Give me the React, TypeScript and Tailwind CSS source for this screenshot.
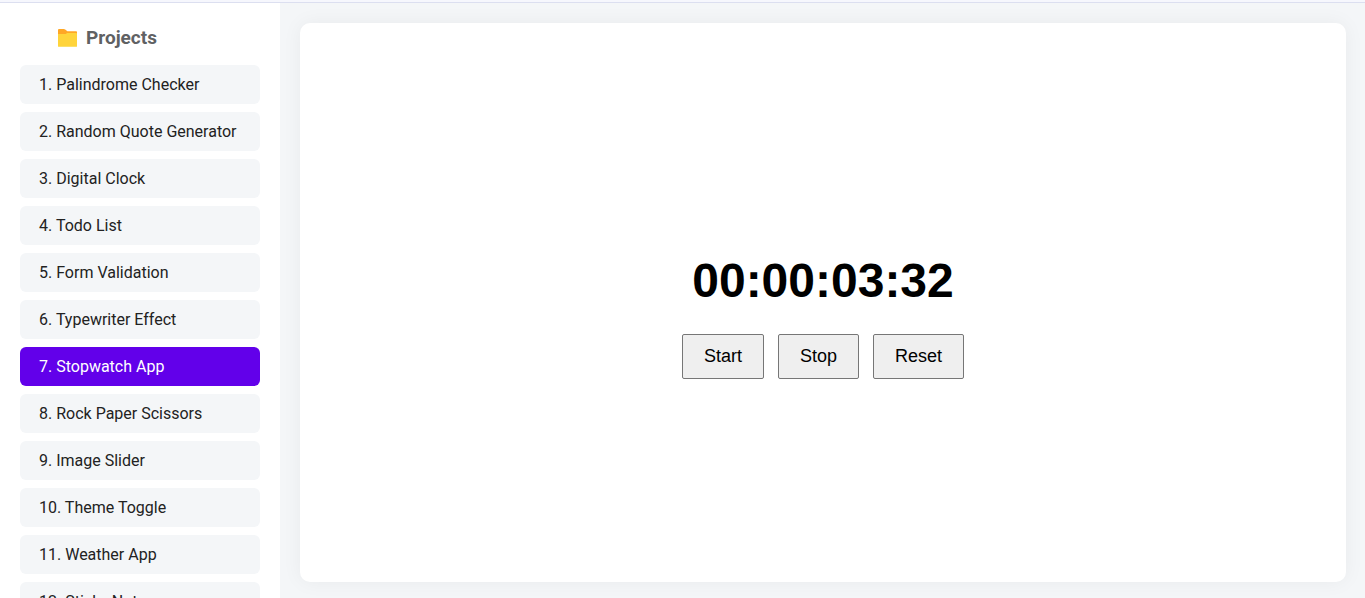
import { useEffect, useRef, useState } from "react";

const projects = [
  "Palindrome Checker",
  "Random Quote Generator",
  "Digital Clock",
  "Todo List",
  "Form Validation",
  "Typewriter Effect",
  "Stopwatch App",
  "Rock Paper Scissors",
  "Image Slider",
  "Theme Toggle",
  "Weather App",
  "Sticky Notes",
];

function FolderIcon() {
  return (
    <svg viewBox="0 0 20 20" className="size-5" aria-hidden="true">
      <path d="M0 2Q0 1 1 1H5.8Q6.6 1 7.2 1.5L9.4 3.2H18.2Q19 3.2 19 4V12H0Z" fill="#ffa726" />
      <path d="M0 6H7.2Q7.9 6 8.4 5.5L9 5H18.2Q19 5 19 5.8V17.8Q19 19 17.8 19H1.2Q0 19 0 17.8Z" fill="#ffd43b" />
      <path d="M0.1 18Q0.3 19 1.2 19H17.8Q18.7 19 18.9 18Z" fill="#fbe06a" />
    </svg>
  );
}

function Sidebar({ active, onSelect }: { active: number; onSelect: (index: number) => void }) {
  return (
    <aside className="w-[280px] shrink-0 overflow-hidden bg-white p-5">
      <h2 className="flex h-[30px] items-center gap-2 pl-[38px] text-[19px] font-bold text-[#5f6163]">
        <FolderIcon />
        Projects
      </h2>
      <nav className="mt-3 flex flex-col gap-2">
        {projects.map((name, index) => (
          <button
            key={name}
            type="button"
            onClick={() => onSelect(index)}
            className={
              index === active
                ? "h-[39px] shrink-0 rounded-md bg-[#6200ea] px-[19px] text-left text-base text-white"
                : "h-[39px] shrink-0 rounded-md bg-[#f4f6f8] px-[19px] text-left text-base text-[#222222]"
            }
          >
            {index + 1}. {name}
          </button>
        ))}
      </nav>
    </aside>
  );
}

const pad = (value: number) => String(value).padStart(2, "0");

function Stopwatch() {
  const [elapsed, setElapsed] = useState(3320);
  const [running, setRunning] = useState(false);
  const elapsedRef = useRef(elapsed);
  elapsedRef.current = elapsed;

  useEffect(() => {
    if (!running) return;
    const startedAt = Date.now() - elapsedRef.current;
    const timer = window.setInterval(() => setElapsed(Date.now() - startedAt), 10);
    return () => window.clearInterval(timer);
  }, [running]);

  const time = [
    Math.floor(elapsed / 3600000),
    Math.floor(elapsed / 60000) % 60,
    Math.floor(elapsed / 1000) % 60,
    Math.floor(elapsed / 10) % 100,
  ];
  const buttonClass =
    "h-[45px] rounded-xs border border-[#767676] bg-[#efefef] px-[21px] pb-0.5 text-lg text-black";

  return (
    <section className="flex flex-1 flex-col items-center justify-center rounded-[10px] bg-white pt-[31px] font-['Liberation_Sans',Arial,sans-serif] shadow-[0_0_20px_rgba(0,0,0,0.05)]">
      <div className="text-5xl font-bold text-black">{time.map(pad).join(":")}</div>
      <div className="mt-[29px] flex gap-3.5">
        <button type="button" className={buttonClass} onClick={() => setRunning(true)}>
          Start
        </button>
        <button type="button" className={buttonClass} onClick={() => setRunning(false)}>
          Stop
        </button>
        <button
          type="button"
          className={buttonClass}
          onClick={() => {
            setRunning(false);
            setElapsed(0);
          }}
        >
          Reset
        </button>
      </div>
    </section>
  );
}

export default function App() {
  const [active, setActive] = useState(6);

  return (
    <div className="flex h-screen flex-col overflow-hidden bg-[#f4f6f8] font-[Roboto,sans-serif]">
      <header className="h-[3px] shrink-0 border-b border-[#dcdff0] bg-[#f6f7fd]" />
      <div className="flex min-h-0 flex-1">
        <Sidebar active={active} onSelect={setActive} />
        <main className="flex min-w-0 flex-1 pt-5 pr-[19px] pb-4 pl-5">
          <Stopwatch />
        </main>
      </div>
    </div>
  );
}
